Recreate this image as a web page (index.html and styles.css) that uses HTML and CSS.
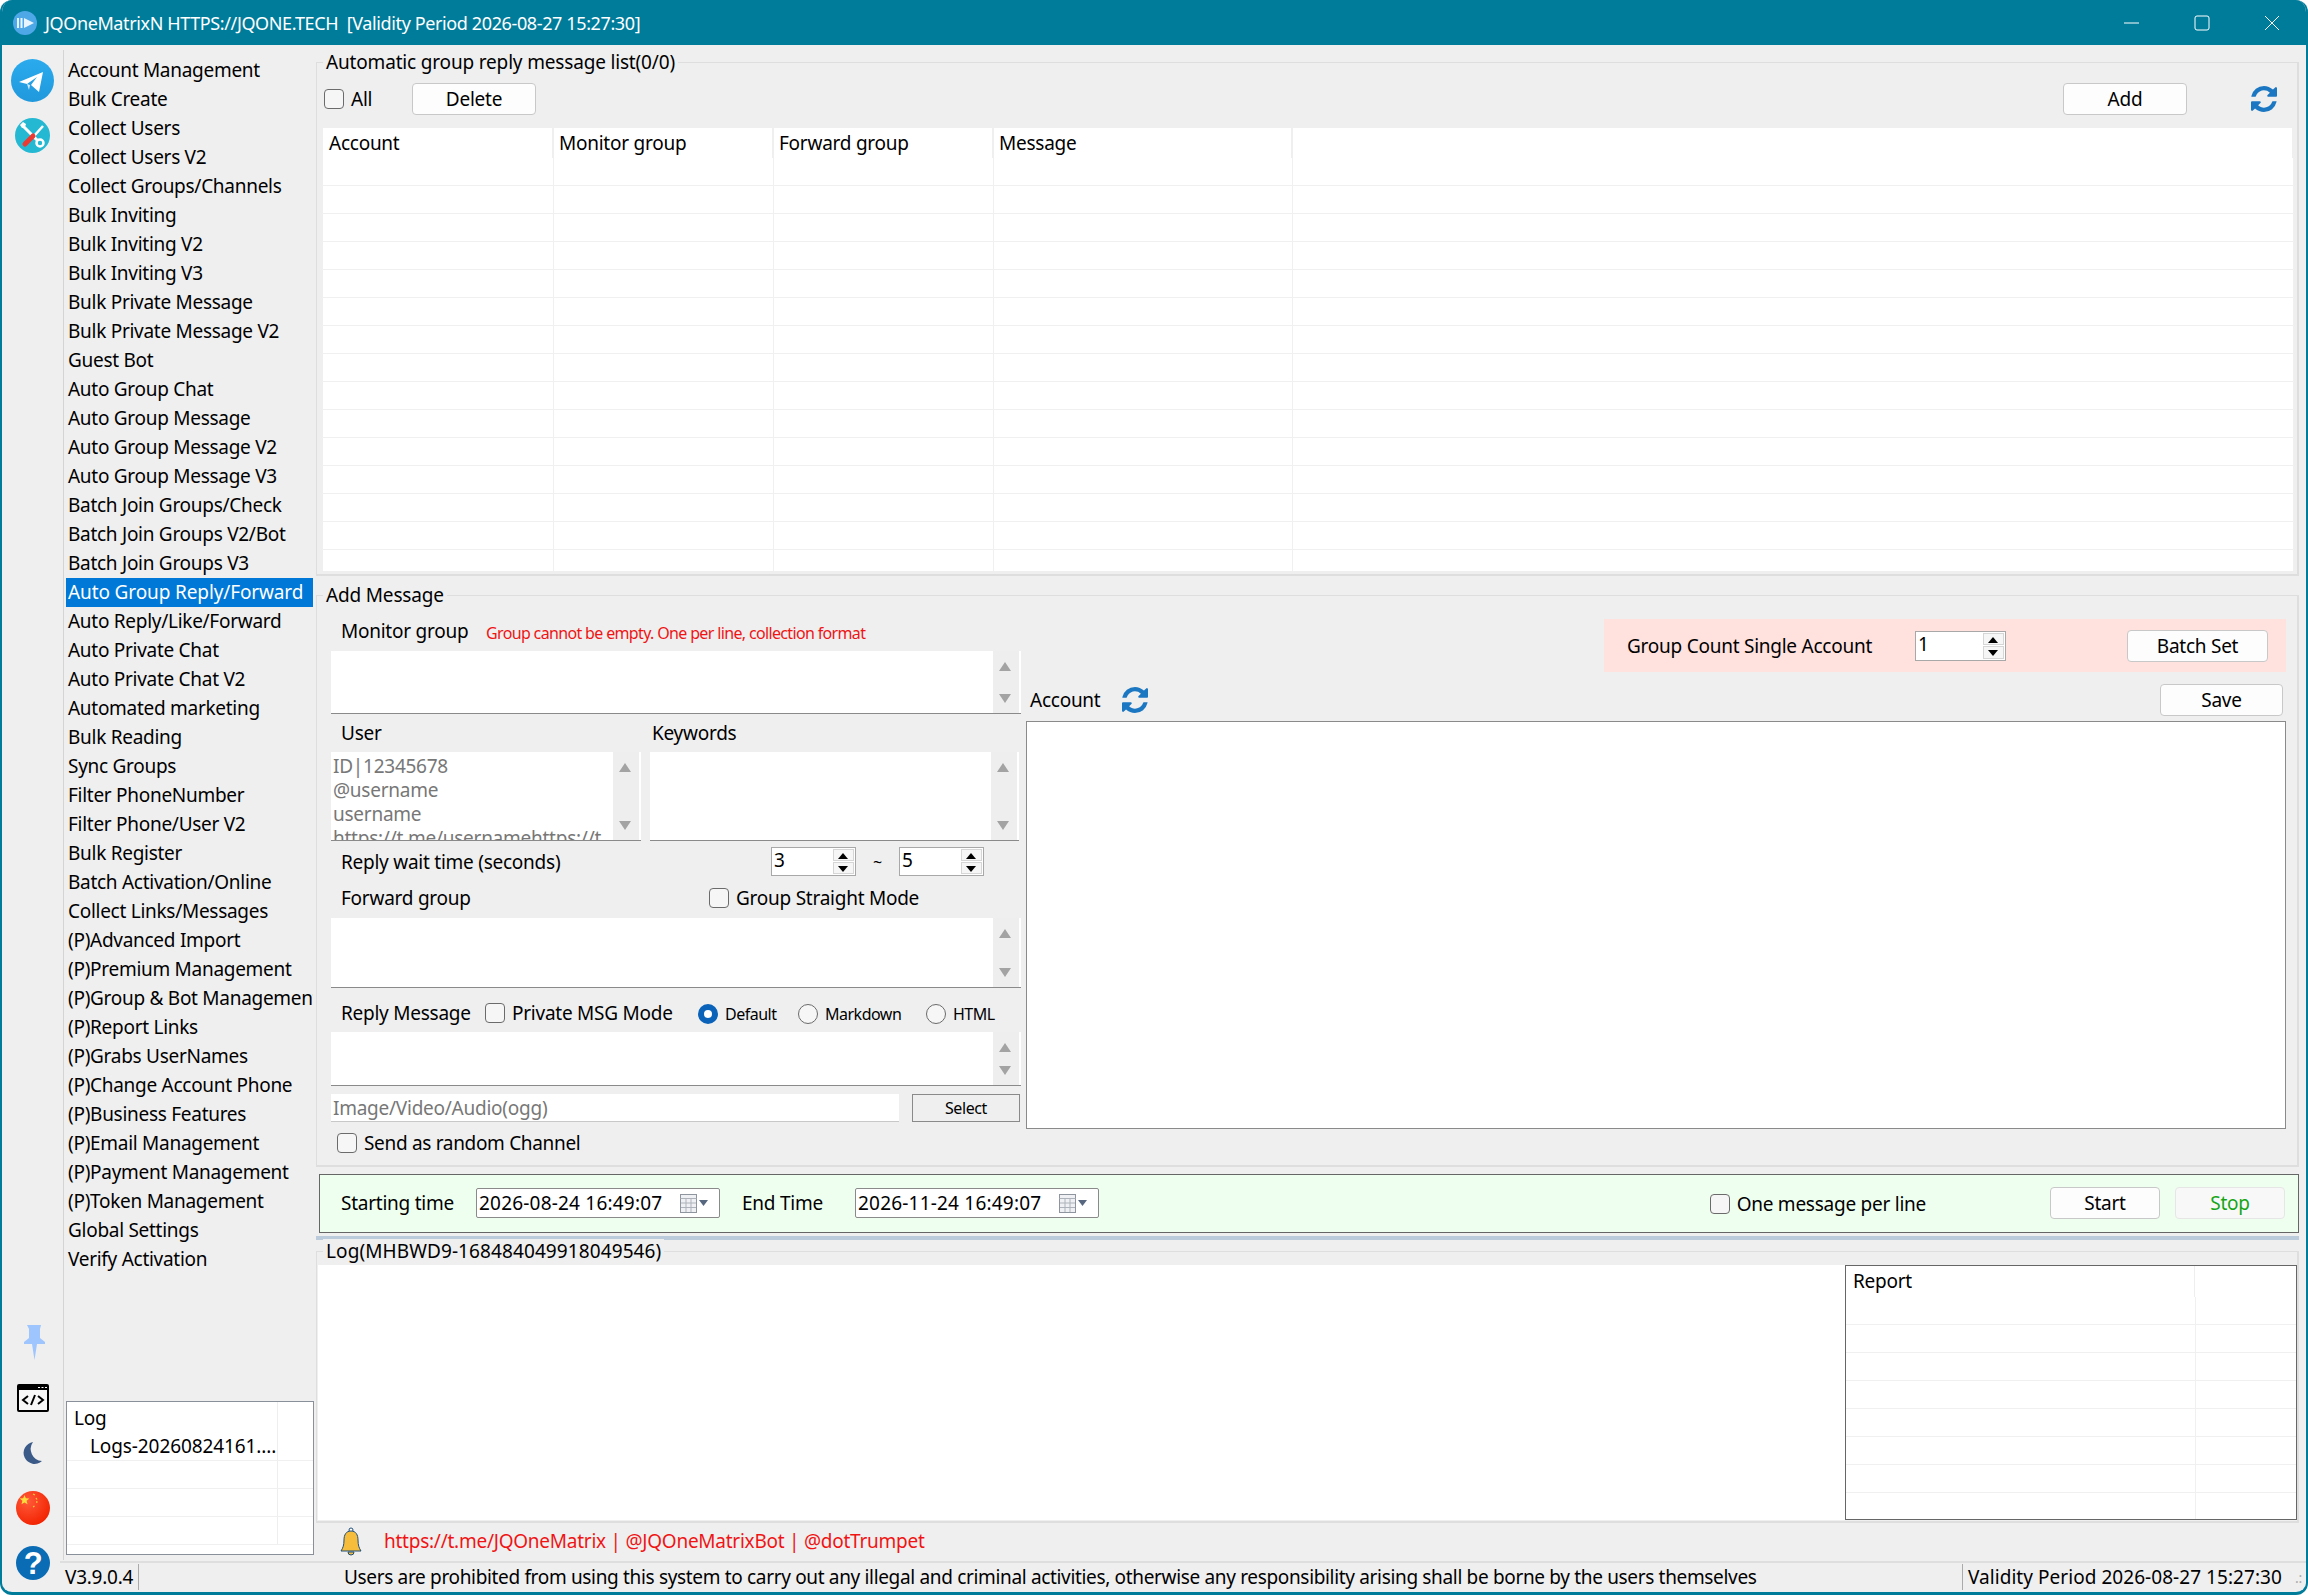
FILE: index.html
```html
<!DOCTYPE html>
<html lang="en">
<head>
    <meta charset="UTF-8">
    <title>JQOneMatrixN</title>
    <link rel="stylesheet" href="styles.css">
</head>
<body>
<svg class="defs" width="0" height="0">
    <symbol id="refresh" viewBox="128 128 1536 1536"><path d="M1639 1056q0 5-1 7-64 268-268 434.5t-478 166.5q-146 0-282.5-55t-243.5-157l-129 129q-19 19-45 19t-45-19-19-45v-448q0-26 19-45t45-19h448q26 0 45 19t19 45-19 45l-137 137q71 66 161 102t187 36q134 0 250-65t186-179q11-17 53-117 8-23 30-23h192q13 0 22.5 9.5t9.5 22.5zm25-800v448q0 26-19 45t-45 19h-448q-26 0-45-19t-19-45 19-45l138-138q-148-137-349-137-134 0-250 65t-186 179q-11 17-53 117-8 23-30 23h-199q-13 0-22.5-9.5t-9.5-22.5v-7q65-268 270-434.5t480-166.5q146 0 284 55.5t245 156.5l130-129q19-19 45-19t45 19 19 45z"/></symbol>
    <symbol id="calendar" viewBox="0 0 28 20">
        <rect x="0.5" y="0.5" width="16" height="18" fill="#eef0f3" stroke="#8f959e"/>
        <path d="M0.5 4.5h16M1 9h15M1 13.5h15M6 5v13M11 5v13" stroke="#aeb3bb" fill="none"/>
        <path d="M19 6h9l-4.5 6z" fill="#56677f"/>
    </symbol>
</svg>

<div class="window">
    <header class="titlebar">
        <svg class="app-logo" viewBox="0 0 24 24">
            <circle cx="12" cy="12" r="12" fill="#4ea8e8"/>
            <path d="M11 7l10 5-10 5z" fill="#e8f4ff"/>
            <rect x="4" y="7" width="2" height="10" fill="#e8f4ff"/>
            <rect x="7.5" y="7" width="2" height="10" fill="#e8f4ff"/>
        </svg>
        <span class="app-title">JQOneMatrixN HTTPS://JQONE.TECH &nbsp;[Validity Period 2026-08-27 15:27:30]</span>
        <div class="win-buttons">
            <svg viewBox="0 0 16 16"><path d="M0 8h15" stroke="#fff" fill="none"/></svg>
            <svg viewBox="0 0 16 16"><rect x="1" y="1" width="14" height="14" rx="2" stroke="#fff" fill="none"/></svg>
            <svg viewBox="0 0 16 16"><path d="M1 1l14 14M15 1L1 15" stroke="#fff" fill="none"/></svg>
        </div>
    </header>

    <div class="content">
        <aside class="rail">
            <svg class="rail-icon tg" viewBox="0 0 43 43">
                <defs><linearGradient id="tgblue" x1="0" y1="0" x2="0" y2="1"><stop offset="0" stop-color="#2aabee"/><stop offset="1" stop-color="#2098dc"/></linearGradient></defs>
                <circle cx="21.5" cy="21.5" r="21.5" fill="url(#tgblue)"/>
                <path d="M8 23l24-10-4 20-8-7 6-8-10 7z" fill="#fff"/>
                <path d="M16 25l3 1-1 5z" fill="#d5eaf7"/>
            </svg>
            <svg class="rail-icon tools" viewBox="0 0 35 35">
                <circle cx="17.5" cy="17.5" r="17.5" fill="#25b8d3"/>
                <path d="M8 8l17 17" stroke="#fff" stroke-width="3" fill="none"/>
                <path d="M5 7l3-3 3 2-1 3-3 1z" fill="#fff"/>
                <circle cx="25" cy="25" r="3.5" stroke="#fff" stroke-width="2.5" fill="#25b8d3"/>
                <path d="M28 8l-9 10" stroke="#fff" stroke-width="2.5" fill="none"/>
                <path d="M18 18l-8 8" stroke="#ec3a33" stroke-width="5" stroke-linecap="round" fill="none"/>
            </svg>
            <div class="rail-spacer"></div>
            <svg class="rail-icon pin" viewBox="0 0 21 35">
                <path d="M3 0h14l-1 4v9l5 4v2h-8l-2.5 16L8 19H0v-2l5-4V4z" fill="#9fc5ff"/>
            </svg>
            <svg class="rail-icon code" viewBox="0 0 32 28">
                <rect x="1" y="1" width="30" height="26" rx="1" fill="#f7f7f7" stroke="#000" stroke-width="2"/>
                <rect x="1" y="1" width="30" height="5" fill="#000"/>
                <path d="M21 3.500h2M24.500 3.500h2M28 3.500h2" stroke="#fff" fill="none"/>
                <path d="M11 12l-5 4 5 4M21 12l5 4-5 4M18 11l-4 10" stroke="#000" stroke-width="2" fill="none"/>
            </svg>
            <svg class="rail-icon moon" viewBox="0 0 20 22">
                <path d="M11 0A11 11 0 1 0 20 19 12 12 0 0 1 11 0z" fill="#3b5a88"/>
            </svg>
            <svg class="rail-icon flag" viewBox="0 0 34 34">
                <defs><radialGradient id="red" cx="35%" cy="30%" r="75%"><stop offset="0" stop-color="#ff5a3a"/><stop offset="1" stop-color="#f22200"/></radialGradient></defs>
                <circle cx="17" cy="17" r="17" fill="url(#red)"/>
                <path d="M8.500 4l1.300 3.300 3.600.2-2.800 2.300.9 3.500-3-1.900-3 1.900.9-3.500-2.800-2.300 3.600-.2z" fill="#ffdc3c"/>
                <path d="M17 3l2 1M20 7l1 1.500M20 11l1.500 0M17 16l1.500-1" stroke="#ffc83a" stroke-width="1.3" fill="none"/>
            </svg>
            <svg class="rail-icon help" viewBox="0 0 34 34">
                <circle cx="17" cy="17" r="17" fill="#0a6cb5"/>
                <text x="17" y="28" text-anchor="middle" class="help-mark">?</text>
            </svg>
        </aside>

        <div class="right">
            <div class="upper">
                <nav class="sidebar">
                    <ul class="menu">
                        <li>Account Management</li>
                        <li>Bulk Create</li>
                        <li>Collect Users</li>
                        <li>Collect Users V2</li>
                        <li>Collect Groups/Channels</li>
                        <li>Bulk Inviting</li>
                        <li>Bulk Inviting V2</li>
                        <li>Bulk Inviting V3</li>
                        <li>Bulk Private Message</li>
                        <li>Bulk Private Message V2</li>
                        <li>Guest Bot</li>
                        <li>Auto Group Chat</li>
                        <li>Auto Group Message</li>
                        <li>Auto Group Message V2</li>
                        <li>Auto Group Message V3</li>
                        <li>Batch Join Groups/Check</li>
                        <li>Batch Join Groups V2/Bot</li>
                        <li>Batch Join Groups V3</li>
                        <li class="selected">Auto Group Reply/Forward</li>
                        <li>Auto Reply/Like/Forward</li>
                        <li>Auto Private Chat</li>
                        <li>Auto Private Chat V2</li>
                        <li>Automated marketing</li>
                        <li>Bulk Reading</li>
                        <li>Sync Groups</li>
                        <li>Filter PhoneNumber</li>
                        <li>Filter Phone/User V2</li>
                        <li>Bulk Register</li>
                        <li>Batch Activation/Online</li>
                        <li>Collect Links/Messages</li>
                        <li>(P)Advanced Import</li>
                        <li>(P)Premium Management</li>
                        <li>(P)Group &amp; Bot Management</li>
                        <li>(P)Report Links</li>
                        <li>(P)Grabs UserNames</li>
                        <li>(P)Change Account Phone</li>
                        <li>(P)Business Features</li>
                        <li>(P)Email Management</li>
                        <li>(P)Payment Management</li>
                        <li>(P)Token Management</li>
                        <li>Global Settings</li>
                        <li>Verify Activation</li>
                    </ul>
                    <div class="log-box">
                        <div class="log-head"><span class="log-name">Log</span><span class="log-rest"></span></div>
                        <div class="log-row"><span class="log-name file">Logs-20260824161....</span><span class="log-rest"></span></div>
                        <div class="log-row"><span class="log-name"></span><span class="log-rest"></span></div>
                        <div class="log-row"><span class="log-name"></span><span class="log-rest"></span></div>
                        <div class="log-row"><span class="log-name"></span><span class="log-rest"></span></div>
                    </div>
                </nav>

                <main class="main">
                    <section class="group group-list">
                        <div class="group-title">Automatic group reply message list(0/0)</div>
                        <div class="list-tools">
                            <label class="check check-all"><span class="box"></span>All</label>
                            <button class="btn btn-delete">Delete</button>
                            <button class="btn btn-add">Add</button>
                            <svg class="refresh refresh-list"><use href="#refresh"/></svg>
                        </div>
                        <div class="table-wrap">
                            <table class="grid">
                                <colgroup><col class="c1"><col class="c2"><col class="c3"><col class="c4"><col></colgroup>
                                <thead><tr><th>Account</th><th>Monitor group</th><th>Forward group</th><th>Message</th><th></th></tr></thead>
                                <tbody>
                                    <tr class="first"><td></td><td></td><td></td><td></td><td></td></tr>
                                    <tr><td></td><td></td><td></td><td></td><td></td></tr>
                                    <tr><td></td><td></td><td></td><td></td><td></td></tr>
                                    <tr><td></td><td></td><td></td><td></td><td></td></tr>
                                    <tr><td></td><td></td><td></td><td></td><td></td></tr>
                                    <tr><td></td><td></td><td></td><td></td><td></td></tr>
                                    <tr><td></td><td></td><td></td><td></td><td></td></tr>
                                    <tr><td></td><td></td><td></td><td></td><td></td></tr>
                                    <tr><td></td><td></td><td></td><td></td><td></td></tr>
                                    <tr><td></td><td></td><td></td><td></td><td></td></tr>
                                    <tr><td></td><td></td><td></td><td></td><td></td></tr>
                                    <tr><td></td><td></td><td></td><td></td><td></td></tr>
                                    <tr><td></td><td></td><td></td><td></td><td></td></tr>
                                    <tr><td></td><td></td><td></td><td></td><td></td></tr>
                                    <tr><td></td><td></td><td></td><td></td><td></td></tr>
                                </tbody>
                            </table>
                        </div>
                    </section>

                    <section class="group group-add">
                        <div class="group-title">Add Message</div>
                        <div class="add-body">
                            <div class="add-left">
                                <div class="row row-monitor">
                                    <span class="lbl lbl-monitor">Monitor group</span>
                                    <span class="hint">Group cannot be empty. One per line, collection format</span>
                                </div>
                                <div class="ta ta-monitor"><div class="ta-text"></div><div class="scroll"></div></div>
                                <div class="row row-user">
                                    <span class="lbl lbl-user">User</span>
                                    <span class="lbl">Keywords</span>
                                </div>
                                <div class="pair">
                                    <div class="ta ta-user">
                                        <div class="ta-text placeholder">ID|12345678<br>@username<br>username<br>https://t.me/usernamehttps://t</div>
                                        <div class="scroll"></div>
                                    </div>
                                    <div class="ta ta-keys"><div class="ta-text"></div><div class="scroll"></div></div>
                                </div>
                                <div class="row row-wait">
                                    <span class="lbl lbl-wait">Reply wait time (seconds)</span>
                                    <div class="spin"><span class="spin-val">3</span><span class="spin-btns"><i class="up"></i><i class="down"></i></span></div>
                                    <span class="tilde">~</span>
                                    <div class="spin"><span class="spin-val">5</span><span class="spin-btns"><i class="up"></i><i class="down"></i></span></div>
                                </div>
                                <div class="row row-forward">
                                    <span class="lbl lbl-forward">Forward group</span>
                                    <label class="check"><span class="box"></span>Group Straight Mode</label>
                                </div>
                                <div class="ta ta-forward"><div class="ta-text"></div><div class="scroll"></div></div>
                                <div class="row row-reply">
                                    <span class="lbl lbl-reply">Reply Message</span>
                                    <label class="check check-private"><span class="box"></span>Private MSG Mode</label>
                                    <label class="radio radio-default"><span class="dot on"></span>Default</label>
                                    <label class="radio radio-markdown"><span class="dot"></span>Markdown</label>
                                    <label class="radio"><span class="dot"></span>HTML</label>
                                </div>
                                <div class="ta ta-reply"><div class="ta-text"></div><div class="scroll"></div></div>
                                <div class="row row-media">
                                    <div class="media-input">Image/Video/Audio(ogg)</div>
                                    <button class="btn-select">Select</button>
                                </div>
                                <div class="row row-random">
                                    <label class="check"><span class="box"></span>Send as random Channel</label>
                                </div>
                            </div>
                            <div class="add-right">
                                <div class="batch">
                                    <span class="batch-label">Group Count Single Account</span>
                                    <div class="spin spin-batch"><span class="spin-val">1</span><span class="spin-btns"><i class="up"></i><i class="down"></i></span></div>
                                    <button class="btn btn-batch">Batch Set</button>
                                </div>
                                <div class="account-head">
                                    <span class="lbl-account">Account</span>
                                    <svg class="refresh"><use href="#refresh"/></svg>
                                    <button class="btn btn-save">Save</button>
                                </div>
                                <div class="account-box"></div>
                            </div>
                        </div>
                    </section>

                    <section class="runbar">
                        <span class="run-label">Starting time</span>
                        <div class="date">2026-08-24 16:49:07<svg class="cal"><use href="#calendar"/></svg></div>
                        <span class="run-label run-end">End Time</span>
                        <div class="date">2026-11-24 16:49:07<svg class="cal"><use href="#calendar"/></svg></div>
                        <label class="check check-line"><span class="box"></span>One message per line</label>
                        <button class="btn btn-start">Start</button>
                        <button class="btn btn-stop">Stop</button>
                    </section>

                    <div class="splitter"></div>

                    <section class="group group-log">
                        <div class="group-title">Log(MHBWD9-168484049918049546)</div>
                        <div class="log-body">
                            <div class="log-text"></div>
                            <div class="report">
                                <div class="rep-head"><span class="rep-name">Report</span><span class="rep-rest"></span></div>
                                <div class="rep-row"></div>
                                <div class="rep-row"></div>
                                <div class="rep-row"></div>
                                <div class="rep-row"></div>
                                <div class="rep-row"></div>
                                <div class="rep-row"></div>
                                <div class="rep-row"></div>
                                <div class="rep-row"></div>
                            </div>
                        </div>
                    </section>

                    <div class="notice">
                        <svg class="bell" viewBox="0 0 22 30">
                            <circle cx="11" cy="3" r="2" fill="#fff" stroke="#1f4e79"/>
                            <path d="M11 4c5 0 7 4 7 9 0 5 1 8 3 11H1c2-3 3-6 3-11 0-5 2-9 7-9z" fill="#f6bd3c" stroke="#1f4e79"/>
                            <path d="M8 25a3 3 0 0 0 6 0z" fill="#f6bd3c" stroke="#1f4e79"/>
                        </svg>
                        <span class="notice-link">https://t.me/JQOneMatrix | @JQOneMatrixBot | @dotTrumpet</span>
                    </div>
                </main>
            </div>

            <footer class="status">
                <span class="version">V3.9.0.4</span>
                <span class="legal">Users are prohibited from using this system to carry out any illegal and criminal activities, otherwise any responsibility arising shall be borne by the users themselves</span>
                <span class="validity">Validity Period 2026-08-27 15:27:30</span>
                <span class="grip">.:</span>
            </footer>
        </div>
    </div>
</div>
</body>
</html>
```

FILE: styles.css
```css
* {
    box-sizing: border-box;
}
html, body {
    margin: 0;
    padding: 0;
    background: #fff;
}
body {
    font-family: "Noto Sans", "Open Sans", sans-serif;
    font-size: 19px;
    letter-spacing: -0.25px;
    color: #000;
}
.defs {
    position: absolute;
}
button {
    font: inherit;
    letter-spacing: inherit;
}
.window {
    width: 2308px;
    height: 1595px;
    display: flex;
    flex-direction: column;
    background: #efefef;
    border: solid #007c9b;
    border-width: 0 2px 3px 2px;
    border-radius: 12px;
    overflow: hidden;
}
.titlebar {
    height: 45px;
    margin: 0 -2px;
    flex: none;
    display: flex;
    align-items: center;
    background: #007c9b;
    color: #fff;
    padding-left: 13px;
}
.app-logo {
    width: 24px;
    height: 24px;
    margin-right: 8px;
}
.app-title {
    font-size: 18px;
    letter-spacing: -0.38px;
}
.win-buttons {
    margin-left: auto;
    display: flex;
    gap: 54px;
    padding-right: 28px;
}
.win-buttons svg {
    width: 16px;
    height: 16px;
}
.content {
    flex: 1;
    display: flex;
    min-height: 0;
}

/* icon rail */
.rail {
    width: 61px;
    flex: none;
    display: flex;
    flex-direction: column;
    align-items: center;
    padding: 14px 0 12px;
}
.rail-icon {
    display: block;
    flex: none;
}
.tg { width: 43px; height: 43px; }
.tools { width: 35px; height: 35px; margin-top: 16px; }
.rail-spacer { flex: 1; }
.pin { width: 21px; height: 35px; margin-left: 3px; }
.code { width: 32px; height: 28px; margin-top: 24px; }
.moon { width: 20px; height: 22px; margin-top: 30px; margin-right: 2px; }
.flag { width: 34px; height: 34px; margin-top: 27px; }
.help { width: 34px; height: 34px; margin-top: 21px; }
.help-mark {
    font-family: "Liberation Sans", sans-serif;
    font-size: 31px;
    font-weight: bold;
    fill: #fff;
}

.right {
    flex: 1;
    min-width: 0;
    display: flex;
    flex-direction: column;
}
.upper {
    flex: 1;
    display: flex;
    min-height: 0;
}

/* menu */
.sidebar {
    width: 253px;
    flex: none;
    display: flex;
    flex-direction: column;
    margin-top: 5px;
    border-left: 1px solid #d4d4d4;
    height: 1510px;
}
.menu {
    list-style: none;
    margin: 0;
    padding: 6px 0 0 2px;
    flex: 1;
}
.menu li {
    height: 29px;
    line-height: 28px;
    padding-left: 2px;
    white-space: nowrap;
    overflow: hidden;
    width: 247px;
    letter-spacing: -0.28px;
}
.menu li.selected {
    background: #0078d7;
    color: #fff;
    letter-spacing: -0.12px;
}
.log-box {
    width: 248px;
    height: 154px;
    margin: 0 0 5px 2px;
    border: 1px solid #8a9099;
    background: #fff;
    overflow: hidden;
}
.log-head, .log-row {
    display: flex;
    height: 28px;
}
.log-head {
    height: 31px;
    line-height: 32px;
}
.log-row {
    border-bottom: 1px solid #f0f0f0;
    line-height: 26px;
}
.log-name {
    width: 211px;
    flex: none;
    padding-left: 7px;
    white-space: nowrap;
    overflow: hidden;
    border-right: 1px solid #eee;
}
.log-name.file {
    padding-left: 23px;
    letter-spacing: -0.1px;
}

/* main panels */
.main {
    flex: 1;
    min-width: 0;
    padding: 17px 7px 0 0;
    display: flex;
    flex-direction: column;
}
.group {
    border: 2px solid #dedede;
    border-width: 1px 2px 2px 1px;
    display: flow-root;
}
.group-title {
    display: table;
    margin: -14px 0 0 6px;
    padding: 0 3px;
    line-height: 26px;
    background: #efefef;
    letter-spacing: -0.17px;
}
.group-list {
    height: 514px;
    flex: none;
}
.list-tools {
    display: flex;
    align-items: center;
    height: 32px;
    margin-top: 8px;
    padding-left: 7px;
}
.check-all {
    width: 88px;
}
.list-tools .btn-delete {
    width: 124px;
}
.list-tools .btn-add {
    margin-left: auto;
    width: 124px;
}
.refresh {
    width: 26px;
    height: 26px;
    fill: #1c77c3;
}
.refresh-list {
    margin: 0 20px 0 64px;
}
.btn {
    height: 32px;
    padding: 0;
    background: #fdfdfd;
    border: 1px solid #c8c8c8;
    border-radius: 4px;
    color: #000;
}
.check, .radio {
    display: flex;
    align-items: center;
    white-space: nowrap;
}
.box {
    width: 20px;
    height: 20px;
    margin-right: 7px;
    border: 1px solid #6b6b6b;
    border-radius: 4px;
    background: #f6f6f6;
    flex: none;
}
.table-wrap {
    margin: 13px 3px 0 6px;
    height: 443px;
    overflow: hidden;
    background: #fff;
}
.grid {
    width: 100%;
    table-layout: fixed;
    border-collapse: collapse;
}
.c1 { width: 230px; }
.c2 { width: 220px; }
.c3 { width: 220px; }
.c4 { width: 299px; }
.grid th {
    height: 30px;
    padding: 0 0 0 5px;
    font-weight: normal;
    text-align: left;
    border-right: 2px solid #efefef;
}
.grid th:first-child {
    padding-left: 6px;
}
.grid td {
    height: 28px;
    padding: 0;
    border-right: 1px solid #f0f0f0;
    border-bottom: 1px solid #f0f0f0;
}
.grid tr.first td {
    height: 27px;
}

.group-add {
    height: 572px;
    flex: none;
    margin-top: 19px;
}
.add-body {
    display: flex;
    padding-left: 14px;
}
.add-left {
    width: 690px;
    flex: none;
    padding-top: 8px;
}
.row {
    display: flex;
    align-items: center;
}
.lbl {
    white-space: nowrap;
}
.row-monitor {
    height: 30px;
    margin-bottom: 5px;
    padding-left: 10px;
}
.lbl-monitor {
    width: 145px;
}
.hint {
    padding-top: 3px;
    font-size: 16px;
    letter-spacing: -0.65px;
    color: #f01414;
}
.ta {
    display: flex;
    background: #fff;
    border-bottom: 1px solid #8a8a8a;
    overflow: hidden;
}
.ta-text {
    flex: 1;
    min-width: 0;
    white-space: nowrap;
    overflow: hidden;
}
.placeholder {
    color: #777;
    line-height: 24px;
    padding: 2px 0 0 2px;
}
.scroll {
    width: 26px;
    flex: none;
    position: relative;
    background: #eeeeee;
    margin-right: 2px;
}
.scroll::before, .scroll::after {
    content: "";
    position: absolute;
    left: 6px;
    border-left: 6.5px solid transparent;
    border-right: 6.5px solid transparent;
}
.scroll::before {
    top: 11px;
    border-bottom: 9px solid #a3a3a3;
}
.scroll::after {
    bottom: 10px;
    border-top: 9px solid #a3a3a3;
}
.ta-monitor { height: 63px; }
.row-user {
    height: 38px;
    padding-left: 10px;
}
.lbl-user {
    width: 311px;
}
.pair {
    display: flex;
    gap: 9px;
}
.ta-user { width: 310px; height: 89px; }
.ta-keys { width: 369px; height: 89px; }
.row-wait {
    height: 41px;
    padding-left: 10px;
}
.lbl-wait {
    width: 430px;
}
.spin {
    display: flex;
    width: 85px;
    height: 29px;
    background: #fff;
    border: 1px solid #a8a8a8;
}
.spin-val {
    flex: 1;
    padding-left: 2px;
    line-height: 25px;
}
.spin-btns {
    width: 21px;
    margin: 1px;
    display: flex;
    flex-direction: column;
    gap: 1px;
}
.spin-btns i {
    flex: 1;
    position: relative;
    background: #f6f6f6;
    border: 1px solid #d6d6d6;
}
.spin-btns i::after {
    content: "";
    position: absolute;
    left: 4px;
    top: 3px;
    border-left: 5px solid transparent;
    border-right: 5px solid transparent;
}
.spin-btns .up::after {
    border-bottom: 6px solid #000;
}
.spin-btns .down::after {
    border-top: 6px solid #000;
}
.tilde {
    width: 43px;
    text-align: center;
    font-size: 16px;
}
.row-forward {
    height: 31px;
    margin-bottom: 5px;
    padding-left: 10px;
}
.lbl-forward {
    width: 368px;
}
.ta-forward { height: 70px; }
.row-reply {
    height: 44px;
    padding: 6px 0 0 10px;
}
.lbl-reply {
    width: 144px;
}
.check-private {
    width: 213px;
}
.radio {
    font-size: 16px;
    letter-spacing: -0.5px;
    padding-top: 2px;
}
.radio-default {
    width: 100px;
}
.radio-markdown {
    width: 128px;
}
.dot {
    width: 20px;
    height: 20px;
    margin-right: 7px;
    border: 1px solid #6b6b6b;
    border-radius: 50%;
    background: #f6f6f6;
}
.dot.on {
    border: 6px solid #0a63b8;
    background: #fff;
}
.ta-reply { height: 54px; }
.row-media {
    height: 28px;
    margin-top: 8px;
}
.media-input {
    width: 568px;
    height: 28px;
    padding-left: 2px;
    line-height: 29px;
    color: #777;
    background: #fff;
    border-bottom: 1px solid #c8c8c8;
}
.btn-select {
    width: 108px;
    height: 28px;
    margin-left: 13px;
    padding: 0;
    font-size: 16px;
    letter-spacing: -0.4px;
    background: #efefef;
    border: 1px solid #8a8a8a;
}
.row-random {
    height: 42px;
    padding-left: 6px;
}
.row-random .check {
    letter-spacing: -0.32px;
}
.add-right {
    flex: 1;
    min-width: 0;
    padding: 11px 11px 0 5px;
}
.batch {
    display: flex;
    align-items: center;
    width: 682px;
    height: 53px;
    margin: 0 0 0 auto;
    padding-left: 23px;
    background: #ffe1de;
}
.batch-label {
    width: 288px;
}
.spin-batch {
    width: 91px;
    height: 30px;
}
.btn-batch {
    width: 141px;
    margin-left: auto;
    margin-right: 18px;
}
.account-head {
    display: flex;
    align-items: center;
    height: 32px;
    margin-top: 12px;
    padding-left: 4px;
}
.lbl-account {
    width: 92px;
}
.btn-save {
    width: 123px;
    margin-left: auto;
    margin-right: 3px;
}
.account-box {
    height: 408px;
    margin-top: 5px;
    background: #fff;
    border: 1px solid #8a8a8a;
}

/* run bar */
.runbar {
    height: 59px;
    flex: none;
    margin: 7px 0 0 3px;
    padding: 0 0 2px 21px;
    display: flex;
    align-items: center;
    background: #efffef;
    border: 1px solid #666;
}
.run-label {
    width: 135px;
}
.run-end {
    width: 113px;
    margin-left: 22px;
}
.date {
    position: relative;
    width: 244px;
    height: 30px;
    line-height: 28px;
    padding-left: 2px;
    letter-spacing: 0.2px;
    background: #fff;
    border: 1px solid #8a8a8a;
    border-radius: 2px;
}
.cal {
    position: absolute;
    right: 11px;
    top: 5px;
    width: 28px;
    height: 20px;
}
.check-line {
    margin-left: auto;
    margin-right: 124px;
    padding-top: 2px;
}
.btn-start {
    width: 110px;
}
.btn-stop {
    width: 110px;
    margin: 0 13px 0 15px;
    color: #16a516;
    background: #f8f8f8;
    border-color: #e6e6e6;
}
.splitter {
    height: 4px;
    flex: none;
    margin-top: 3px;
    background: #bccbdb;
}

/* log panel */
.group-log {
    height: 272px;
    flex: none;
    margin-top: 11px;
}
.group-log .group-title {
    line-height: 24px;
    margin-top: -13px;
    letter-spacing: 0.1px;
}
.log-body {
    display: flex;
    height: 255px;
    margin: 2px 0 0 1px;
}
.log-text {
    flex: 1;
    background: #fff;
}
.report {
    width: 452px;
    height: 255px;
    background: #fff;
    border: 1px solid #666;
    overflow: hidden;
}
.rep-head {
    display: flex;
    height: 31px;
    line-height: 30px;
}
.rep-name {
    width: 349px;
    padding-left: 7px;
    border-right: 1px solid #eee;
}
.rep-row {
    height: 28px;
    border-bottom: 1px solid #f0f0f0;
    background: linear-gradient(#f0f0f0, #f0f0f0) 349px 0 / 1px 100% no-repeat;
}
.notice {
    display: flex;
    align-items: center;
    height: 39px;
    padding: 0 0 1px 24px;
}
.bell {
    width: 22px;
    height: 30px;
}
.notice-link {
    margin-left: 22px;
    padding-bottom: 1px;
    color: #f01414;
}

/* status bar */
.status {
    height: 31px;
    flex: none;
    margin-left: -3px;
    display: flex;
    align-items: center;
    border-top: 2px solid #dedede;
    padding: 0 4px 1px 5px;
}
.version {
    width: 74px;
    flex: none;
    border-right: 1px solid #aaa;
    line-height: 26px;
}
.legal {
    margin-left: 205px;
    white-space: nowrap;
    letter-spacing: -0.335px;
}
.validity {
    margin-left: auto;
    width: 331px;
    flex: none;
    padding-left: 5px;
    white-space: nowrap;
    letter-spacing: 0.05px;
    border-left: 1px solid #aaa;
    line-height: 26px;
}
.grip {
    margin-left: 2px;
    color: #aaa;
    font-size: 14px;
}
```
